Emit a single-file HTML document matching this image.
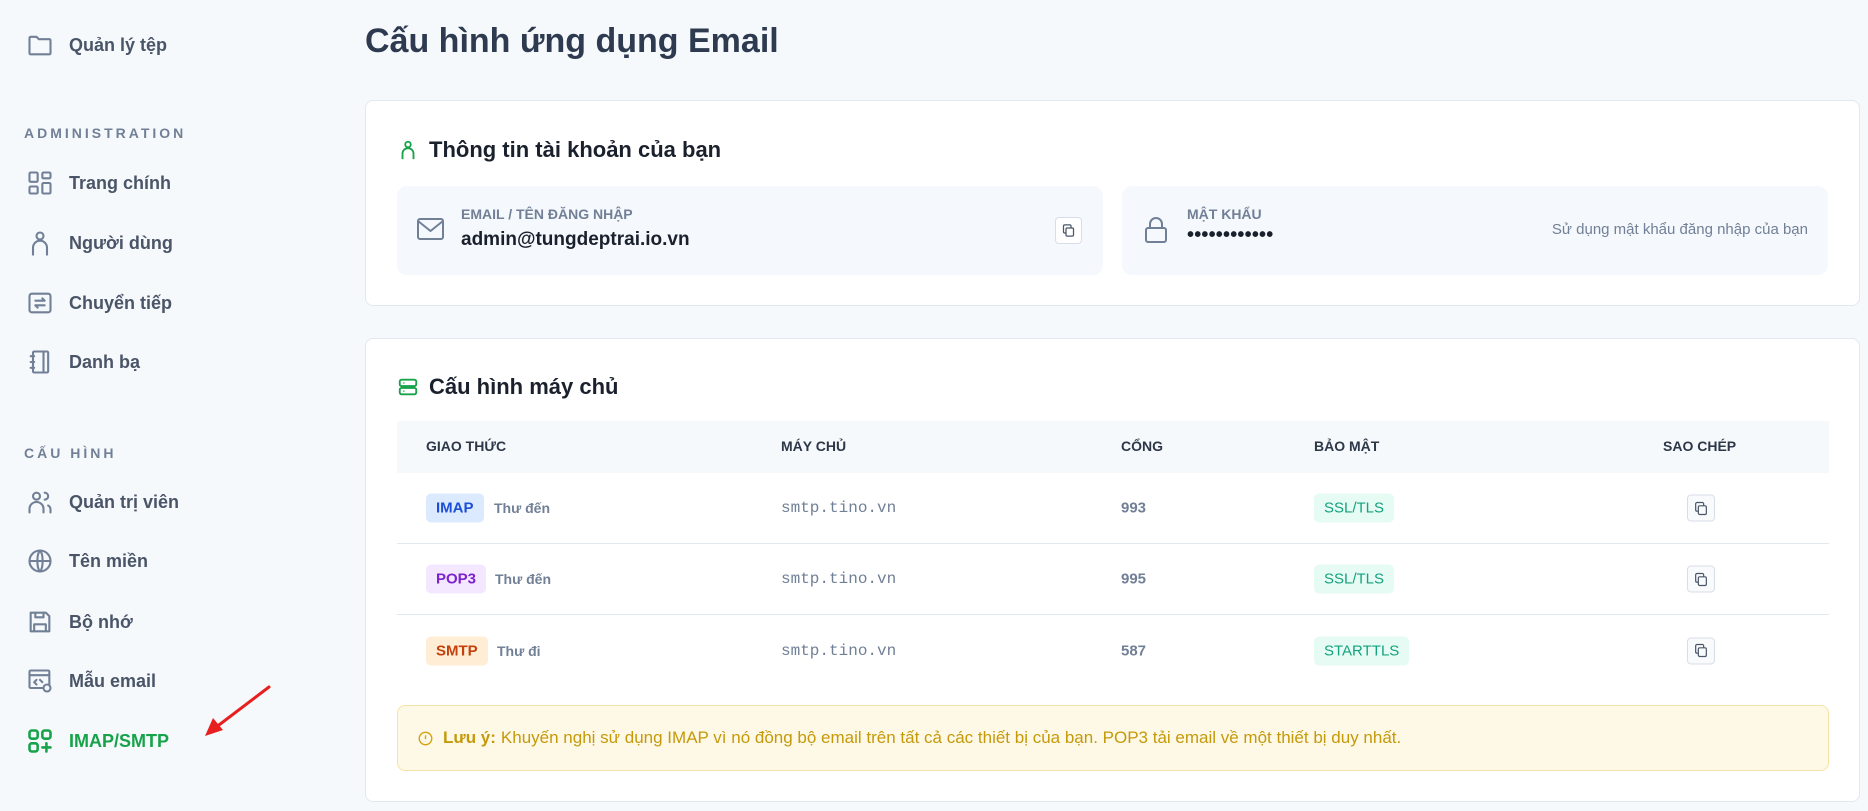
<!DOCTYPE html>
<html><head><meta charset="utf-8"><style>
*{box-sizing:border-box;margin:0;padding:0}
body{width:1868px;height:811px;overflow:hidden;background:#f6f9fc;font-family:"Liberation Sans","Noto Sans CJK SC",sans-serif;position:relative;color:#2d3748}
.a{position:absolute}
.nav{position:absolute;left:26px;display:flex;align-items:center;font-size:18px;font-weight:600;color:#4a5568;height:30px}
.nav svg{width:28px;height:28px;margin-right:15px;fill:none;stroke:#718096;stroke-width:1.8;stroke-linecap:round;stroke-linejoin:round}
.sec{position:absolute;left:24px;font-size:14px;font-weight:700;letter-spacing:3px;color:#718096}
.card{position:absolute;left:365px;width:1495px;background:#fff;border:1px solid #e2e8f0;border-radius:8px}
.h{position:absolute;left:31px;display:flex;align-items:center;font-size:22px;font-weight:700;color:#1a202c}
.h svg{width:22px;height:22px;margin-right:10px;fill:none;stroke:#16a34a;stroke-width:2}
.box{position:absolute;background:#f5f8fc;border-radius:10px}
.lbl{position:absolute;font-size:14px;color:#718096;font-weight:600}
.th{position:absolute;top:27px;font-size:14px;font-weight:700;color:#2d3748}
.row{position:absolute;left:31px;width:1432px;height:71px;border-bottom:1px solid #e2e8f0}
.row>*{position:absolute;top:50%;transform:translateY(-50%)}
.bd{left:29px;height:29px;line-height:29px;padding:0 10px;border-radius:5px;font-size:15px;font-weight:700}
.sub{font-size:14px;color:#718096;font-weight:600}
.mono{left:384px;font-family:"Liberation Mono",monospace;font-size:16px;color:#718096}
.port{left:724px;font-size:15px;font-weight:700;color:#718096}
.sec2{left:917px;height:29px;line-height:29px;padding:0 10px;background:#e6fbf3;color:#14a37f;border-radius:5px;font-size:15px}
.cp{left:1290px;width:28px;height:27px;border:1px solid #d8dee8;border-radius:4px;background:#f8fafc;display:flex;align-items:center;justify-content:center}
.cp svg{width:16px;height:16px;fill:none;stroke:#4a5568;stroke-width:1.8}
</style></head><body>

<div class="nav" style="top:30px"><svg viewBox="0 0 24 24"><path d="M3 6a1 1 0 0 1 1-1h5l2 2h9a1 1 0 0 1 1 1v11a1 1 0 0 1-1 1H4a1 1 0 0 1-1-1z"/></svg>Quản lý tệp</div>
<div class="sec" style="top:125px">ADMINISTRATION</div>
<div class="nav" style="top:168px"><svg viewBox="0 0 24 24"><rect x="3" y="3" width="7" height="8" rx="1"/><rect x="14" y="3" width="7" height="5" rx="1"/><rect x="3" y="15" width="7" height="6" rx="1"/><rect x="14" y="12" width="7" height="9" rx="1"/></svg>Trang chính</div>
<div class="nav" style="top:228px"><svg viewBox="0 0 24 24"><circle cx="12" cy="6" r="3"/><path d="M6 22v-6a6 6 0 0 1 12 0v6"/></svg>Người dùng</div>
<div class="nav" style="top:288px"><svg viewBox="0 0 24 24"><rect x="3" y="4" width="18" height="16" rx="2"/><path d="M8 10h8l-2-2M16 14H8l2 2"/></svg>Chuyển tiếp</div>
<div class="nav" style="top:347px"><svg viewBox="0 0 24 24"><rect x="6" y="3" width="13" height="18" rx="1"/><path d="M15 3v18M4 7h3M4 12h3M4 17h3"/></svg>Danh bạ</div>
<div class="sec" style="top:445px">CẤU HÌNH</div>
<div class="nav" style="top:487px"><svg viewBox="0 0 24 24"><circle cx="9" cy="7" r="3"/><path d="M3 21v-3a6 6 0 0 1 12 0v3M16 4a3 3 0 0 1 0 6M19 15a4 4 0 0 1 2 3v3"/></svg>Quản trị viên</div>
<div class="nav" style="top:546px"><svg viewBox="0 0 24 24"><circle cx="12" cy="12" r="9"/><path d="M3 12h18M12 3c3 3 3 15 0 18M12 3c-3 3-3 15 0 18"/></svg>Tên miền</div>
<div class="nav" style="top:607px"><svg viewBox="0 0 24 24"><path d="M4 4h13l3 3v13H4z"/><path d="M8 4v4h7V4M7 20v-6h10v6"/></svg>Bộ nhớ</div>
<div class="nav" style="top:666px"><svg viewBox="0 0 24 24"><rect x="3" y="3" width="17" height="15" rx="1"/><path d="M3 7h17M9 11l-2 2 2 2M12 11l2 2"/><circle cx="18" cy="18" r="3" fill="#f6f9fc"/></svg>Mẫu email</div>
<div class="nav" style="top:726px;color:#16a34a"><svg viewBox="0 0 24 24" style="stroke:#16a34a;stroke-width:2.2"><rect x="3" y="3" width="7" height="7" rx="2"/><rect x="14" y="3" width="7" height="7" rx="2"/><rect x="3" y="14" width="7" height="7" rx="2"/><path d="M17.5 14v7M14 17.5h7"/></svg>IMAP/SMTP</div>
<svg class="a" style="left:195px;top:680px" width="85" height="65" viewBox="0 0 85 65"><path d="M74 7L20 48" stroke="#e81f1f" stroke-width="3" stroke-linecap="round"/><path d="M10 56l8-18 10 12z" fill="#e81f1f"/></svg>

<div class="a" style="left:365px;top:22px;font-size:34px;font-weight:600;color:#2d3a4f">Cấu hình ứng dụng Email</div>

<div class="card" style="top:100px;height:206px">
 <div class="h" style="top:36px"><svg viewBox="0 0 24 24"><circle cx="12" cy="6" r="3"/><path d="M6 22v-6a6 6 0 0 1 12 0v6"/></svg>Thông tin tài khoản của bạn</div>
 <div class="box" style="left:31px;top:85px;width:706px;height:89px">
  <svg class="a" style="left:20px;top:31px" width="27" height="24" viewBox="0 0 27 24" fill="none" stroke="#718096" stroke-width="2"><rect x="1" y="2" width="25" height="20" rx="2"/><path d="M1 4l12.5 10L26 4"/></svg>
  <div class="lbl" style="left:64px;top:20px">EMAIL / TÊN ĐĂNG NHẬP</div>
  <div class="a" style="left:64px;top:43px;font-size:19px;font-weight:700;color:#1a202c">admin@tungdeptrai.io.vn</div>
  <div class="a" style="left:658px;top:31px;width:27px;height:27px;border:1px solid #d8dee8;border-radius:4px;background:#fff;display:flex;align-items:center;justify-content:center"><svg width="15" height="15" viewBox="0 0 24 24" fill="none" stroke="#4a5568" stroke-width="2"><rect x="8" y="8" width="12" height="13" rx="2"/><path d="M16 8V5a2 2 0 0 0-2-2H6a2 2 0 0 0-2 2v9a2 2 0 0 0 2 2h2"/></svg></div>
 </div>
 <div class="box" style="left:756px;top:85px;width:706px;height:89px">
  <svg class="a" style="left:22px;top:30px" width="24" height="28" viewBox="0 0 24 28" fill="none" stroke="#718096" stroke-width="2"><rect x="2" y="12" width="20" height="14" rx="2"/><path d="M6 12V8a6 6 0 0 1 12 0v4"/></svg>
  <div class="lbl" style="left:65px;top:20px">MẬT KHẨU</div>
  <div class="a" style="left:65px;top:38px;font-size:20px;font-weight:700;color:#1a202c;letter-spacing:0.2px">••••••••••••</div>
  <div class="a" style="right:20px;top:35px;font-size:15px;color:#718096">Sử dụng mật khẩu đăng nhập của bạn</div>
 </div>
</div>

<div class="card" style="top:338px;height:464px">
 <div class="h" style="top:35px"><svg viewBox="0 0 24 24"><rect x="3" y="4" width="18" height="7" rx="2"/><rect x="3" y="13" width="18" height="7" rx="2"/><path d="M7 7.5h1M7 16.5h1"/></svg>Cấu hình máy chủ</div>
 <div class="a" style="left:31px;top:82px;width:1432px;height:52px;background:#f6f9fc">
  <div class="th" style="left:29px;top:17px">GIAO THỨC</div>
  <div class="th" style="left:384px;top:17px">MÁY CHỦ</div>
  <div class="th" style="left:724px;top:17px">CỔNG</div>
  <div class="th" style="left:917px;top:17px">BẢO MẬT</div>
  <div class="th" style="left:1266px;top:17px">SAO CHÉP</div>
 </div>
 <div class="row" style="top:134px"><span class="bd" style="background:#dbeafe;color:#1d4ed8">IMAP</span><span class="sub" style="left:97px">Thư đến</span><span class="mono">smtp.tino.vn</span><span class="port">993</span><span class="sec2">SSL/TLS</span><span class="cp"><svg viewBox="0 0 24 24"><rect x="8" y="8" width="12" height="13" rx="2"/><path d="M16 8V5a2 2 0 0 0-2-2H6a2 2 0 0 0-2 2v9a2 2 0 0 0 2 2h2"/></svg></span></div>
 <div class="row" style="top:205px"><span class="bd" style="background:#f3e8ff;color:#7e22ce">POP3</span><span class="sub" style="left:98px">Thư đến</span><span class="mono">smtp.tino.vn</span><span class="port">995</span><span class="sec2">SSL/TLS</span><span class="cp"><svg viewBox="0 0 24 24"><rect x="8" y="8" width="12" height="13" rx="2"/><path d="M16 8V5a2 2 0 0 0-2-2H6a2 2 0 0 0-2 2v9a2 2 0 0 0 2 2h2"/></svg></span></div>
 <div class="row" style="top:276px;border-bottom:none"><span class="bd" style="background:#ffedd5;color:#c2410c">SMTP</span><span class="sub" style="left:100px">Thư đi</span><span class="mono">smtp.tino.vn</span><span class="port">587</span><span class="sec2">STARTTLS</span><span class="cp"><svg viewBox="0 0 24 24"><rect x="8" y="8" width="12" height="13" rx="2"/><path d="M16 8V5a2 2 0 0 0-2-2H6a2 2 0 0 0-2 2v9a2 2 0 0 0 2 2h2"/></svg></span></div>
 <div class="a" style="left:31px;top:366px;width:1432px;height:66px;background:#fef8e6;border:1px solid #f6e4a6;border-radius:8px;display:flex;align-items:center;padding-left:20px;font-size:17px;color:#c59a0a">
  <svg width="15" height="15" viewBox="0 0 24 24" fill="none" stroke="#d4a20c" stroke-width="2.2" style="margin-right:10px"><circle cx="12" cy="12" r="10"/><path d="M12 7v6M12 16.5v.5"/></svg>
  <b style="margin-right:5px">Lưu ý:</b>Khuyến nghị sử dụng IMAP vì nó đồng bộ email trên tất cả các thiết bị của bạn. POP3 tải email về một thiết bị duy nhất.
 </div>
</div>
</body></html>
